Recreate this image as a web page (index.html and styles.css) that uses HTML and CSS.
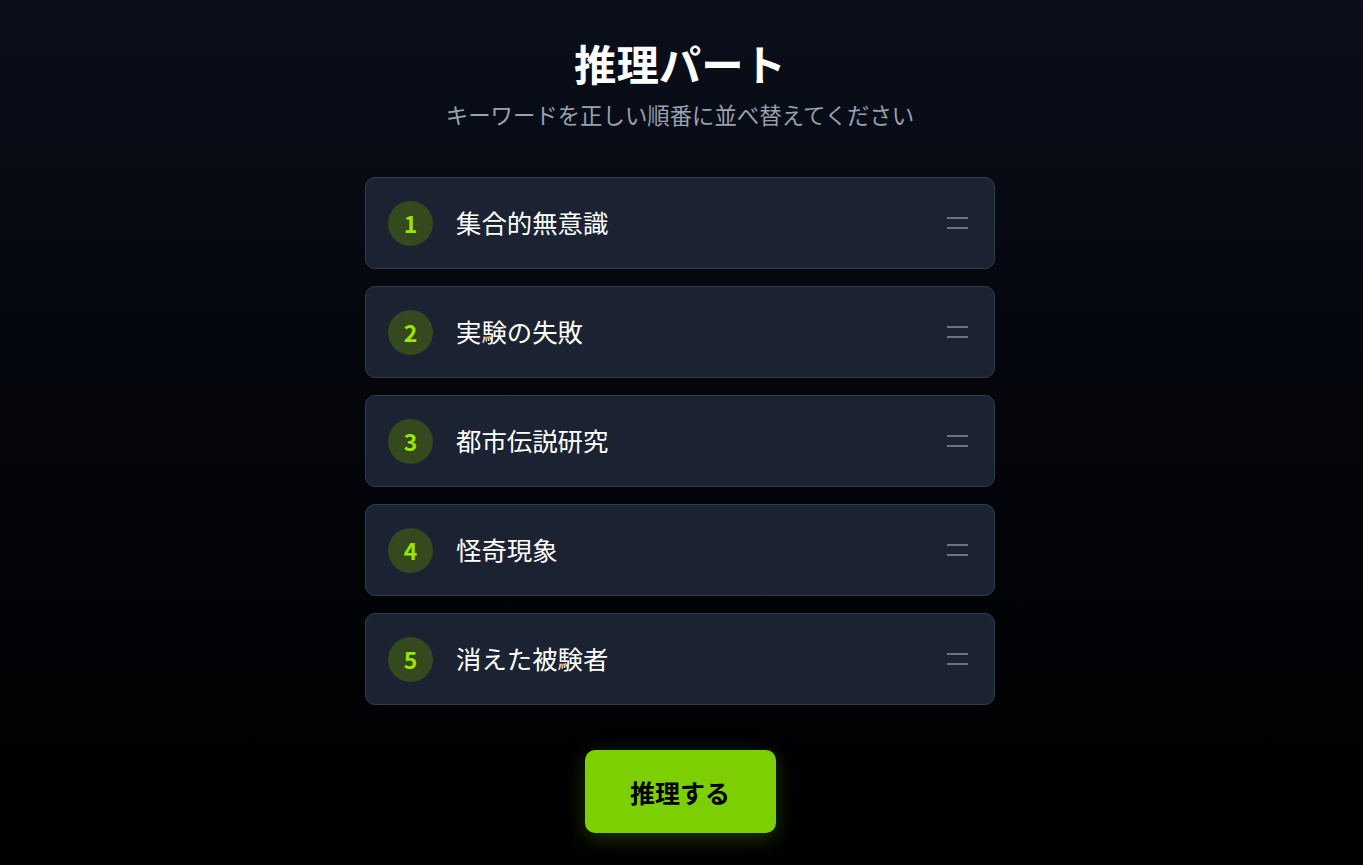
FILE: index.html
```html
<!DOCTYPE html>
<html lang="ja">
<head>
  <meta charset="UTF-8">
  <meta name="viewport" content="width=device-width, initial-scale=1.0">
  <title>推理パート</title>
  <link rel="stylesheet" href="styles.css">
</head>
<body>
  <div class="page">
    <h1 class="title">推理パート</h1>
    <p class="subtitle">キーワードを正しい順番に並べ替えてください</p>

    <ul class="keyword-list">
      <li class="keyword-item">
        <span class="keyword-num">1</span>
        <span class="keyword-text">集合的無意識</span>
        <span class="drag-handle"></span>
      </li>
      <li class="keyword-item">
        <span class="keyword-num">2</span>
        <span class="keyword-text">実験の失敗</span>
        <span class="drag-handle"></span>
      </li>
      <li class="keyword-item">
        <span class="keyword-num">3</span>
        <span class="keyword-text">都市伝説研究</span>
        <span class="drag-handle"></span>
      </li>
      <li class="keyword-item">
        <span class="keyword-num">4</span>
        <span class="keyword-text">怪奇現象</span>
        <span class="drag-handle"></span>
      </li>
      <li class="keyword-item">
        <span class="keyword-num">5</span>
        <span class="keyword-text">消えた被験者</span>
        <span class="drag-handle"></span>
      </li>
    </ul>

    <button class="submit-btn" type="button">推理する</button>
  </div>
</body>
</html>
```

FILE: styles.css
```css
html, body {
  margin: 0;
  padding: 0;
  height: 100%;
}

body {
  font-family: "Noto Sans CJK JP", "Noto Sans", sans-serif;
  background: linear-gradient(to bottom, #0a0f1b 0%, #04060c 45%, #000000 100%);
  color: #ffffff;
}

.page {
  display: flex;
  flex-direction: column;
  align-items: center;
  padding-top: 34px;
  padding-right: 3px;
}

.title {
  margin: 0;
  font-size: 42.4px;
  font-weight: 700;
  line-height: 58px;
}

.subtitle {
  margin: 6px 0 0;
  font-size: 22.4px;
  line-height: 32px;
  color: #99a1af;
}

.keyword-list {
  list-style: none;
  margin: 47px 0 0;
  padding: 0;
  width: 630px;
  display: flex;
  flex-direction: column;
  gap: 17px;
}

.keyword-item {
  display: flex;
  align-items: center;
  gap: 23px;
  height: 92px;
  box-sizing: border-box;
  padding: 0 26px 0 22px;
  background-color: #1b2332;
  border: 1px solid #323c4d;
  border-radius: 10px;
}

.keyword-num {
  width: 45px;
  height: 45px;
  border-radius: 50%;
  background-color: #35491f;
  color: #9ae600;
  font-size: 23px;
  font-weight: 700;
  display: flex;
  align-items: center;
  justify-content: center;
  flex-shrink: 0;
}

.keyword-text {
  flex: 1;
  font-size: 25.4px;
  line-height: 1;
}

.drag-handle {
  width: 21px;
  height: 12px;
  box-sizing: border-box;
  border-top: 2px solid #6b7280;
  border-bottom: 2px solid #6b7280;
}

.submit-btn {
  margin-top: 45px;
  width: 191px;
  height: 83px;
  border: none;
  border-radius: 10px;
  background-color: #7ccf00;
  color: #000000;
  font-family: inherit;
  font-size: 25px;
  font-weight: 700;
  cursor: pointer;
  box-shadow: 0 6px 20px rgba(124, 207, 0, 0.25);
}

.submit-btn:hover {
  background-color: #6cb800;
}
```
